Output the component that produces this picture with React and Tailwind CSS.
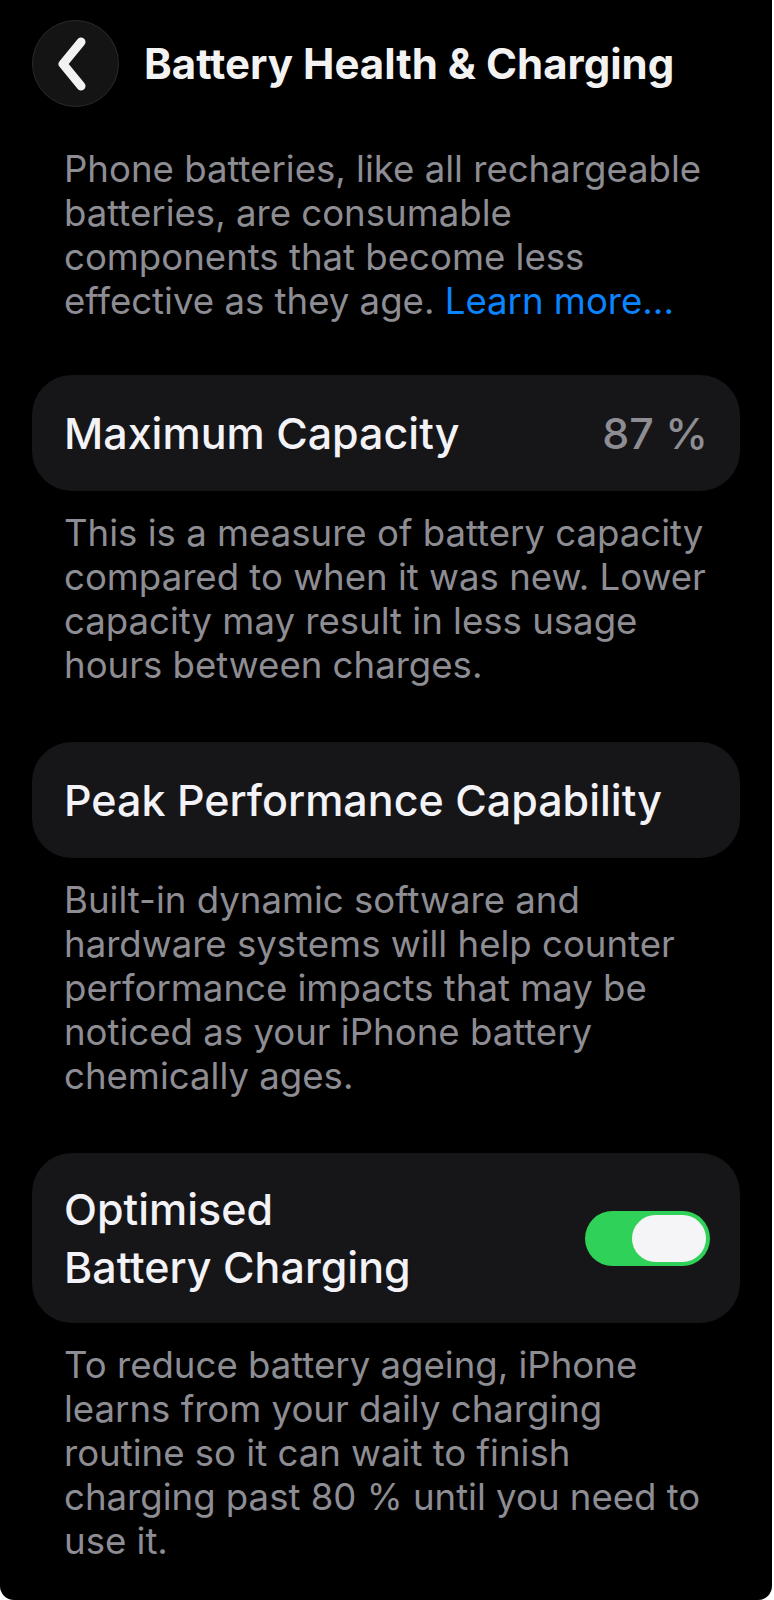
export default function App() {
  const font = { fontFamily: 'Inter, "Noto Sans", "Liberation Sans", sans-serif' };
  const Desc = ({ lines, className = "" }) => (
    <div className={"px-[64px] text-[36.6px] leading-[44px] text-[#8d8d93] " + className}>
      {lines.map((l, i) => (
        <div key={i} className="whitespace-nowrap">{l}</div>
      ))}
    </div>
  );
  return (
    <div className="min-h-[1600px] bg-white" style={font}>
      <div className="w-[772px] min-h-[1600px] bg-black rounded-b-[14px] overflow-hidden pb-[30px]">
        {/* header */}
        <div className="flex items-center pt-[20px] pl-[32px]">
          <div className="w-[87px] h-[87px] rounded-full bg-[#141414] border border-[#2a2a2a] flex items-center justify-center">
            <svg width="40" height="60" viewBox="0 0 40 60" className="ml-[-6px]">
              <path d="M28 8 L10 30 L28 52" fill="none" stroke="#f2f2f2" strokeWidth="9" strokeLinecap="round" strokeLinejoin="round" />
            </svg>
          </div>
          <div className="ml-[25px] text-[42px] font-bold text-[#f2f2f2]">Battery Health &amp; Charging</div>
        </div>

        <Desc
          className="mt-[40px]"
          lines={[
            "Phone batteries, like all rechargeable",
            "batteries, are consumable",
            "components that become less",
            <span key="l">effective as they age. <span className="text-[#0a84ff]">Learn more...</span></span>,
          ]}
        />

        {/* card 1 */}
        <div className="mx-[32px] mt-[52px] h-[116px] rounded-[40px] bg-[#161618] flex items-center justify-between px-[32px]">
          <span className="text-[43px] font-medium text-[#f2f2f7]">Maximum Capacity</span>
          <span className="text-[43px] font-medium text-[#8d8d93]">87 %</span>
        </div>

        <Desc
          className="mt-[20px]"
          lines={[
            "This is a measure of battery capacity",
            "compared to when it was new. Lower",
            "capacity may result in less usage",
            "hours between charges.",
          ]}
        />

        {/* card 2 */}
        <div className="mx-[32px] mt-[55px] h-[116px] rounded-[40px] bg-[#161618] flex items-center px-[32px]">
          <span className="text-[43px] font-medium text-[#f2f2f7]">Peak Performance Capability</span>
        </div>

        <Desc
          className="mt-[20px]"
          lines={[
            "Built-in dynamic software and",
            "hardware systems will help counter",
            "performance impacts that may be",
            "noticed as your iPhone battery",
            "chemically ages.",
          ]}
        />

        {/* card 3 */}
        <div className="mx-[32px] mt-[55px] h-[170px] rounded-[40px] bg-[#161618] flex items-center justify-between pl-[32px] pr-[30px]">
          <div className="text-[43px] font-medium leading-[58px] text-[#f2f2f7]">
            <div>Optimised</div>
            <div>Battery Charging</div>
          </div>
          <div className="w-[125px] h-[55px] rounded-full bg-[#30d158] flex items-center justify-end p-[4px]">
            <div className="w-[74px] h-[47px] rounded-full bg-[#f5f5f7]" />
          </div>
        </div>

        <Desc
          className="mt-[20px]"
          lines={[
            "To reduce battery ageing, iPhone",
            "learns from your daily charging",
            "routine so it can wait to finish",
            "charging past 80 % until you need to",
            "use it.",
          ]}
        />
      </div>
    </div>
  );
}
